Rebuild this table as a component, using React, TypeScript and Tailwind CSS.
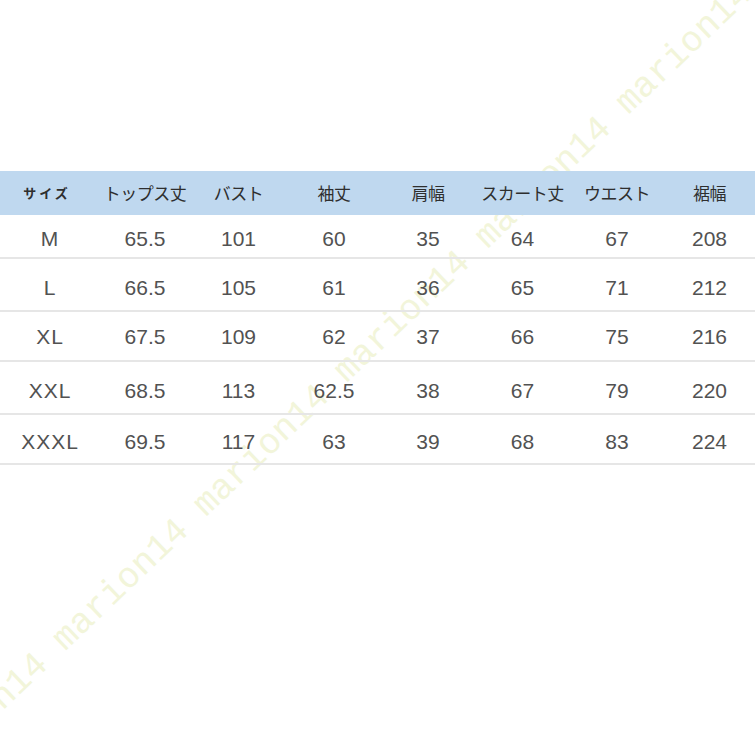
import React from "react";

const headers = ["サイズ", "トップス丈", "バスト", "袖丈", "肩幅", "スカート丈", "ウエスト", "裾幅"];

const rows: { cells: string[]; h: string; pt: string }[] = [
  { cells: ["M", "65.5", "101", "60", "35", "64", "67", "208"], h: "h-[44px]", pt: "pt-[6px]" },
  { cells: ["L", "66.5", "105", "61", "36", "65", "71", "212"], h: "h-[53px]", pt: "pt-[6px]" },
  { cells: ["XL", "67.5", "109", "62", "37", "66", "75", "216"], h: "h-[50px]", pt: "pt-[2px]" },
  { cells: ["XXL", "68.5", "113", "62.5", "38", "67", "79", "220"], h: "h-[53px]", pt: "pt-[7px]" },
  { cells: ["XXXL", "69.5", "117", "63", "39", "68", "83", "224"], h: "h-[50px]", pt: "pt-[6px]" },
];

const grid = "grid grid-cols-[100px_90px_97px_94px_94px_95px_94px_91px]";

export default function App() {
  const wm = Array(8).fill("marion14").join(" ");
  return (
    <div className="relative w-[755px] h-[755px] overflow-hidden bg-white">
      <div
        className="absolute left-[-82px] top-[761px] origin-left -rotate-[43.6deg] whitespace-nowrap text-[36px] leading-[36px] text-[#f2f5da] pointer-events-none"
        style={{ fontFamily: '"Liberation Mono", monospace' }}
      >
        {wm}
      </div>
      <div className="relative pt-[171px]">
        <div className={`${grid} h-[44px] bg-[#bfd8ef] items-center text-[#2e2e2e]`}
          style={{ fontFamily: '"Noto Sans CJK JP", "Noto Sans", sans-serif' }}>
          {headers.map((h, i) => (
            <div key={i} className="flex justify-center">
              {i === 0 ? (
                <span className="text-[13px] font-bold tracking-[3px] -ml-[6px]">{h}</span>
              ) : (
                <span className="text-[17px] tracking-[-0.5px]">{h}</span>
              )}
            </div>
          ))}
        </div>
        {rows.map((r, ri) => (
          <div key={ri} className={`${grid} ${r.h} ${r.pt} items-center border-b-2 border-[#e6e6e6] text-[21px] text-[#525252]`}
            style={{ fontFamily: '"Liberation Sans", Arial, sans-serif' }}>
            {r.cells.map((c, ci) => (
              <div key={ci} className={`flex justify-center ${ci === 0 ? "tracking-[1px]" : ""}`}>{c}</div>
            ))}
          </div>
        ))}
      </div>
    </div>
  );
}
